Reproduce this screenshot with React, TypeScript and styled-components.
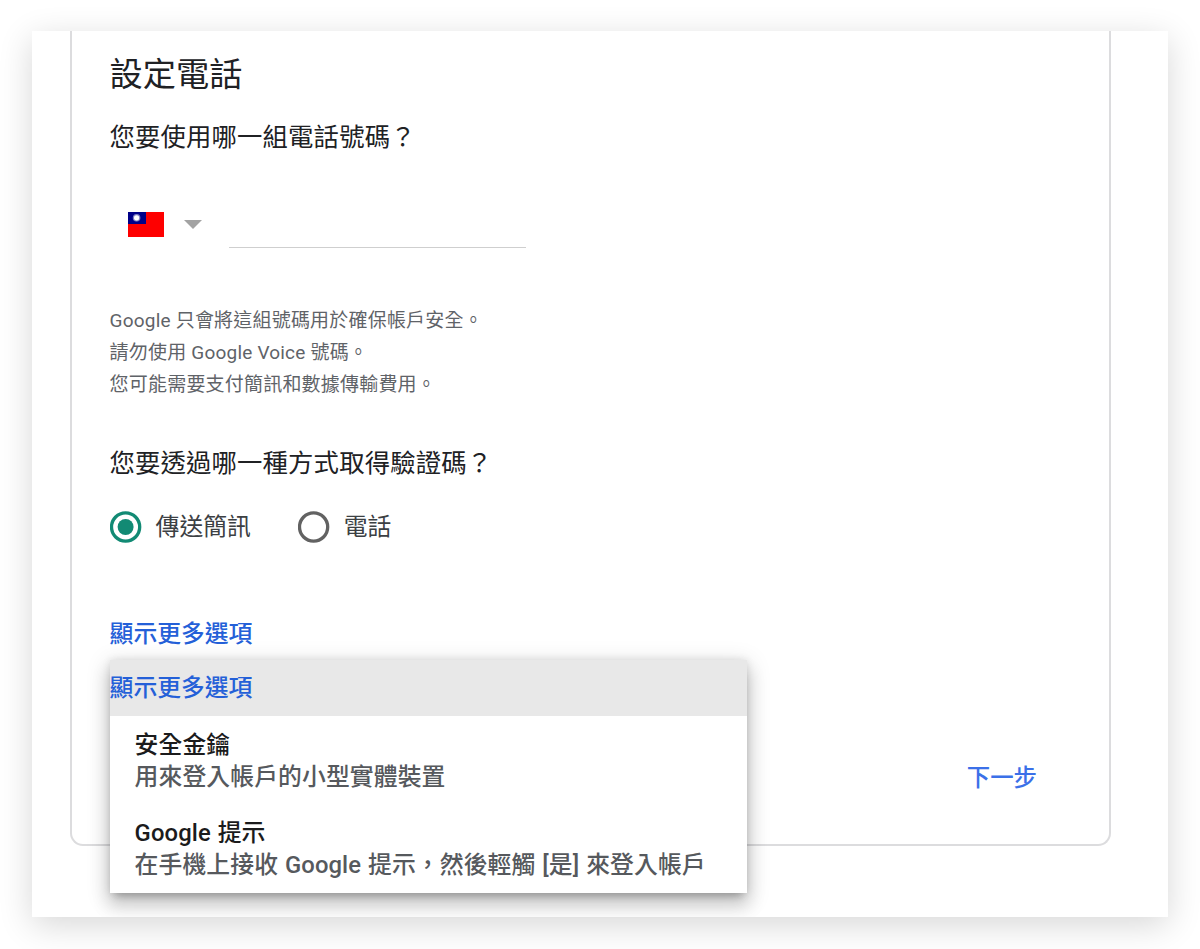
import React from "react";
import styled, { createGlobalStyle } from "styled-components";

const GlobalStyle = createGlobalStyle`
  *, *::before, *::after { box-sizing: border-box; }
  html, body { margin: 0; padding: 0; background: #fff; }
  body { font-family: Roboto, "Noto Sans CJK TC", sans-serif; color: #202124; }
  h1, h2, p, fieldset { margin: 0; padding: 0; border: 0; font-weight: 400; }
`;

const Page = styled.main`
  display: flex;
  width: 1200px;
  height: 949px;
  padding: 31px 32px;
  overflow: hidden;
`;

const Window = styled.div`
  width: 1136px;
  height: 886px;
  padding: 0 57px 0 38px;
  background: #fff;
  box-shadow: 0 8px 32px rgba(0, 0, 0, 0.16);
`;

const Card = styled.section`
  display: flex;
  flex-direction: column;
  height: 815px;
  padding: 22px 38px 0 37.6px;
  border: 2px solid #dcdcde;
  border-top: 0;
  border-radius: 0 0 13px 13px;
`;

const Title = styled.h1`
  font-size: 33.2px;
  line-height: 44px;
  white-space: nowrap;
`;

const Question = styled.h2<{ $gap: number }>`
  margin-top: ${(p) => p.$gap}px;
  font-size: 25.35px;
  line-height: 36px;
  letter-spacing: 0.16px;
  white-space: nowrap;
`;

const PhoneRow = styled.div`
  display: flex;
  height: 58px;
  margin-top: 35px;
`;

const CountryButton = styled.button`
  display: flex;
  align-items: flex-start;
  gap: 20px;
  width: 119px;
  padding: 22px 0 0 18px;
  border: 0;
  background: none;
`;

const Arrow = styled.svg`
  margin-top: 8px;
`;

const PhoneInput = styled.input`
  width: 297px;
  border: 0;
  border-bottom: 1px solid #cfcfcf;
  background: none;
  outline: 0;
  font: inherit;
`;

const Notes = styled.div`
  margin-top: 57.4px;
  color: #5f6368;
  font-size: 19px;
  line-height: 31.6px;
  letter-spacing: 0.2px;
  white-space: nowrap;
`;

const Radios = styled.fieldset`
  display: flex;
  gap: 47px;
  margin-top: 30px;
`;

const RadioLabel = styled.label`
  display: flex;
  align-items: center;
  gap: 14px;
  height: 32px;
  color: #3c4043;
  font-size: 23.8px;
  line-height: 32px;
`;

const More = styled.div`
  position: relative;
  margin-top: 73px;
`;

const MoreText = styled.span`
  display: block;
  color: #2460d8;
  font-size: 23.8px;
  font-weight: 500;
  line-height: 36px;
  white-space: nowrap;
`;

const Menu = styled.div`
  position: absolute;
  top: 44px;
  left: 0;
  width: 637px;
  height: 233px;
  background: #fff;
  box-shadow:
    0 8px 8px -5px rgba(0, 0, 0, 0.2),
    0 12.7px 16px 1.6px rgba(0, 0, 0, 0.14),
    0 4.8px 22px 3.2px rgba(0, 0, 0, 0.12),
    0 0 8px rgba(0, 0, 0, 0.1);
  clip-path: inset(-40px -40px -24px -40px);
`;

const MenuHead = styled.div`
  height: 56px;
  padding-top: 10px;
  background: #e8e8e8;
`;

const Option = styled.div`
  height: 88px;
  padding: 13px 0 0 25px;
  font-size: 23.8px;
  font-weight: 500;
  line-height: 32px;
  letter-spacing: 0.12px;
  word-spacing: 0.8px;
  white-space: nowrap;
`;

const OptionTitle = styled.p`
  color: #1b1b1c;
  font-weight: 500;
`;

const OptionText = styled.p`
  color: #56595d;
  font-weight: 500;
`;

const Footer = styled.div`
  display: flex;
  justify-content: flex-end;
  margin-top: 107.4px;
  padding-right: 34px;
`;

const NextButton = styled.button`
  padding: 0;
  border: 0;
  background: none;
  color: #3b70e8;
  font: 500 23.4px/36px Roboto, "Noto Sans CJK TC", sans-serif;
`;

const Flag = () => (
  <svg width="36" height="25" viewBox="0 0 36 25">
    <rect width="36" height="25" fill="#fe0000" />
    <rect width="18" height="12" fill="#000088" />
    <circle cx="8.6" cy="5.8" r="3.8" fill="#fff" opacity="0.5" />
    <circle cx="8.6" cy="5.8" r="2.6" fill="#fff" />
  </svg>
);

const RadioMark = ({ on = false }: { on?: boolean }) => {
  const color = on ? "#128a74" : "#626262";
  return (
    <svg width="32" height="32" viewBox="0 0 32 32">
      <circle cx="15.6" cy="16" r="14.1" fill="none" stroke={color} strokeWidth="3.3" />
      {on && <circle cx="15.6" cy="16" r="8" fill={color} />}
    </svg>
  );
};

const options = [
  { title: "安全金鑰", text: "用來登入帳戶的小型實體裝置" },
  { title: "Google 提示", text: "在手機上接收 Google 提示，然後輕觸 [是] 來登入帳戶" },
];

export default function App() {
  return (
    <Page lang="zh-TW">
      <GlobalStyle />
      <Window>
        <Card>
          <Title>設定電話</Title>
          <Question $gap={22}>您要使用哪一組電話號碼？</Question>
          <PhoneRow>
            <CountryButton aria-label="台灣">
              <Flag />
              <Arrow width="18" height="9" viewBox="0 0 18 9">
                <path d="M0 0h18L9 9z" fill="#a3a3a3" />
              </Arrow>
            </CountryButton>
            <PhoneInput type="tel" />
          </PhoneRow>
          <Notes>
            <p>Google 只會將這組號碼用於確保帳戶安全。</p>
            <p>請勿使用 Google Voice 號碼。</p>
            <p>您可能需要支付簡訊和數據傳輸費用。</p>
          </Notes>
          <Question $gap={45}>您要透過哪一種方式取得驗證碼？</Question>
          <Radios>
            <RadioLabel><RadioMark on />傳送簡訊</RadioLabel>
            <RadioLabel><RadioMark />電話</RadioLabel>
          </Radios>
          <More>
            <MoreText>顯示更多選項</MoreText>
            <Menu>
              <MenuHead><MoreText>顯示更多選項</MoreText></MenuHead>
              {options.map((o) => (
                <Option key={o.title}>
                  <OptionTitle>{o.title}</OptionTitle>
                  <OptionText>{o.text}</OptionText>
                </Option>
              ))}
            </Menu>
          </More>
          <Footer><NextButton>下一步</NextButton></Footer>
        </Card>
      </Window>
    </Page>
  );
}
